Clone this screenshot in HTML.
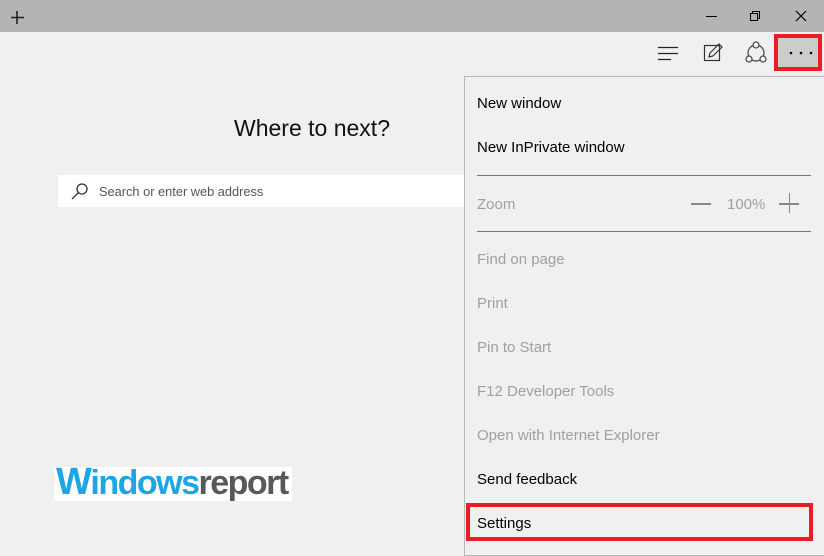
<!DOCTYPE html>
<html><head><style>
*{margin:0;padding:0;box-sizing:border-box}
body{width:824px;height:545px;background:#f0f0f0;font-family:"Liberation Sans",sans-serif;position:relative;overflow:hidden}
.a{position:absolute}
.mi{position:absolute;left:477px;font-size:15px;color:#000}
.g{color:#a0a0a0}
</style></head><body>
<div class="a" style="left:0;top:0;width:824px;height:32px;background:#b4b4b4"></div>
<svg class="a" style="left:0;top:0" width="824" height="80">
<path d="M17 11v13M11 17.5h13" stroke="#222" stroke-width="1.6"/>
<path d="M706 16.5h11" stroke="#000" stroke-width="1"/>
<rect x="750.5" y="13.5" width="7" height="7" fill="none" stroke="#000"/>
<path d="M752.5 13.5v-2h7v7h-2" fill="none" stroke="#000"/>
<path d="M796 11l10 10M806 11l-10 10" stroke="#000" stroke-width="1.2"/>
<path d="M658 47.5h20M658 53.5h20M658 59.5h13" stroke="#222" stroke-width="1.3"/>
<rect x="704.5" y="45.5" width="15" height="15" fill="none" stroke="#333" stroke-width="1.2"/>
<path d="M709 57l1-4 9-9 3 3-9 9z" fill="none" stroke="#333" stroke-width="1.2"/>
<circle cx="756" cy="53" r="8" fill="none" stroke="#444" stroke-width="1.2"/>
<circle cx="756" cy="45" r="3" fill="#f0f0f0" stroke="#444" stroke-width="1.2"/>
<circle cx="749" cy="59" r="3" fill="#f0f0f0" stroke="#444" stroke-width="1.2"/>
<circle cx="763" cy="59" r="3" fill="#f0f0f0" stroke="#444" stroke-width="1.2"/>
<rect x="776" y="36" width="43" height="32" fill="#cccccc"/>
<circle cx="791" cy="53" r="1.3" fill="#000"/><circle cx="801" cy="53" r="1.3" fill="#000"/><circle cx="811" cy="53" r="1.3" fill="#000"/>
<rect x="776" y="36" width="44" height="33" fill="none" stroke="#ec1c24" stroke-width="4"/>
</svg>
<div class="a" style="left:0;top:115px;width:624px;text-align:center;font-size:23px;color:#111">Where to next?</div>
<div class="a" style="left:58px;top:175px;width:420px;height:32px;background:#fff"></div>
<svg class="a" style="left:70px;top:182px" width="20" height="20"><circle cx="12" cy="7" r="5" fill="none" stroke="#333" stroke-width="1.3"/><path d="M8.5 10.5L2 17" stroke="#333" stroke-width="1.3"/></svg>
<div class="a" style="left:99px;top:184px;font-size:12.8px;color:#555">Search or enter web address</div>
<div class="a" style="left:54px;top:467px;width:238px;height:34px;background:#fff"></div>
<div class="a" style="left:56px;top:462px;font-size:34px;font-weight:bold;letter-spacing:-1.5px;line-height:40px"><span style="color:#1ea5e6;font-size:38px">W</span><span style="color:#1ea5e6">indows</span><span style="color:#58595b">report</span></div>
<div class="a" style="left:464px;top:76px;width:370px;height:480px;background:#f0f0f0;border:1px solid #b8b8b8"></div>
<div class="mi" style="top:95px">New window</div>
<div class="mi" style="top:139px">New InPrivate window</div>
<div class="a" style="left:477px;top:175px;width:334px;height:1px;background:#777"></div>
<div class="mi g" style="top:196px">Zoom</div>
<div class="a" style="left:691px;top:203px;width:20px;height:1.5px;background:#888"></div>
<div class="a g" style="left:727px;top:196px;font-size:15px">100%</div>
<div class="a" style="left:779px;top:203px;width:20px;height:1.5px;background:#888"></div>
<div class="a" style="left:788.5px;top:193px;width:1.5px;height:20px;background:#888"></div>
<div class="a" style="left:477px;top:231px;width:334px;height:1px;background:#777"></div>
<div class="mi g" style="top:251px">Find on page</div>
<div class="mi g" style="top:295px">Print</div>
<div class="mi g" style="top:339px">Pin to Start</div>
<div class="mi g" style="top:383px">F12 Developer Tools</div>
<div class="mi g" style="top:427px">Open with Internet Explorer</div>
<div class="mi" style="top:471px">Send feedback</div>
<div class="mi" style="top:515px">Settings</div>
<div class="a" style="left:466px;top:503px;width:347px;height:38px;border:4px solid #ec1c24"></div>
</body></html>
